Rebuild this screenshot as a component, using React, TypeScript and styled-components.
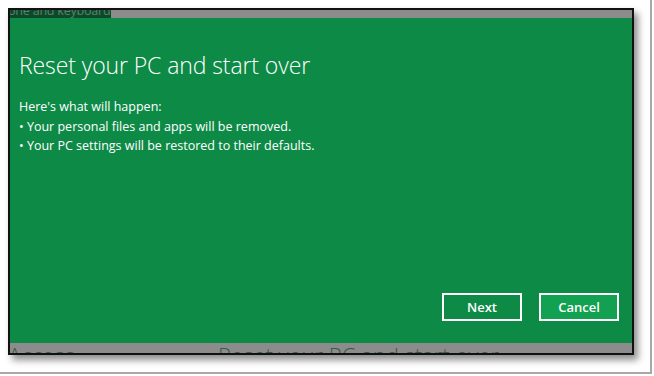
import React from "react";
import styled, { createGlobalStyle } from "styled-components";

const GlobalStyle = createGlobalStyle`
  html, body {
    margin: 0;
    padding: 0;
    background: #ffffff;
  }
  body {
    font-family: "Open Sans", "Noto Sans", "Liberation Sans", sans-serif;
  }
`;

const Page = styled.div`
  width: 654px;
  height: 376px;
  box-sizing: border-box;
  overflow: hidden;
  background: #ffffff;
`;

const OuterEdge = styled.div`
  width: 652px;
  height: 374px;
  box-sizing: border-box;
  border-right: 2px solid #a8a8a8;
  border-bottom: 2px solid #a8a8a8;
  padding: 8px 0 0 8px;
`;

const Frame = styled.div`
  width: 626px;
  height: 347px;
  box-sizing: border-box;
  border: 2px solid #111111;
  display: flex;
  flex-direction: column;
  box-shadow: 4px 5px 7px rgba(0, 0, 0, 0.45);
`;

const TopStrip = styled.div`
  height: 8px;
  display: flex;
  background: #8c8c8c;
  overflow: hidden;
`;

const TopTab = styled.div`
  width: 101px;
  background: #0b4a28;
  overflow: hidden;
  white-space: nowrap;
  font-size: 12.5px;
  line-height: 13px;
  letter-spacing: -0.2px;
  color: #5f806d;
  & > span {
    display: block;
    margin-top: -6px;
    margin-left: -2px;
  }
`;

const Body = styled.div`
  flex: 1;
  background: #0e8a47;
  color: #ffffff;
  display: flex;
  flex-direction: column;
  padding: 32px 13px 22px 9px;
`;

const Title = styled.h1`
  margin: 0 0 17px 0;
  font-size: 23px;
  font-weight: 300;
  line-height: 30px;
  letter-spacing: -0.1px;
`;

const Lines = styled.div`
  font-size: 12.5px;
  line-height: 19.5px;
  font-weight: 400;
  & > p {
    margin: 0;
  }
`;

const Actions = styled.div`
  margin-top: auto;
  display: flex;
  justify-content: flex-end;
  gap: 17px;
`;

const Button = styled.button<{ $primary?: boolean }>`
  width: 80px;
  height: 28px;
  box-sizing: border-box;
  border: 2px solid #ffffff;
  background: ${({ $primary }) => ($primary ? "#12a151" : "transparent")};
  color: #ffffff;
  font-family: "Open Sans", "Noto Sans", sans-serif;
  font-size: 13px;
  font-weight: 600;
  padding: 0;
`;

const BottomStrip = styled.div`
  height: 10px;
  background: #8c8c8c;
  overflow: hidden;
  display: flex;
  white-space: nowrap;
  color: #3a5a49;
  font-size: 22px;
  font-weight: 300;
  line-height: 26px;
`;

const BottomLeft = styled.span`
  display: block;
  width: 210px;
  margin-top: -1px;
  margin-left: -2px;
`;

const BottomRight = styled.span`
  display: block;
  margin-top: -1px;
`;

export default function App() {
  return (
    <Page>
      <GlobalStyle />
      <OuterEdge>
        <Frame>
          <TopStrip>
            <TopTab>
              <span>one and keyboard</span>
            </TopTab>
          </TopStrip>
          <Body>
            <Title>Reset your PC and start over</Title>
            <Lines>
              <p>Here's what will happen:</p>
              <p>• Your personal files and apps will be removed.</p>
              <p>• Your PC settings will be restored to their defaults.</p>
            </Lines>
            <Actions>
              <Button>Next</Button>
              <Button $primary>Cancel</Button>
            </Actions>
          </Body>
          <BottomStrip>
            <BottomLeft>Access</BottomLeft>
            <BottomRight>Reset your PC and start over</BottomRight>
          </BottomStrip>
        </Frame>
      </OuterEdge>
    </Page>
  );
}
